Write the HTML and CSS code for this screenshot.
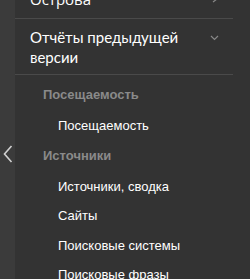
FILE: index.html
```html
<!DOCTYPE html>
<html lang="ru">
<head>
    <meta charset="UTF-8">
    <title>Меню</title>
    <link rel="stylesheet" href="styles.css">
</head>
<body>
    <div class="shell">
        <div class="back">
            <svg width="10" height="18" viewBox="0 0 10 18"><path d="M8.5 1 L1.5 9 L8.5 17" fill="none" stroke="#d0d0d0" stroke-width="1.6"/></svg>
        </div>
        <nav class="menu">
            <div class="item item-top">
                <span>Острова</span>
                <svg class="arrow" width="8" height="8" viewBox="0 0 8 8"><path d="M2 1 L6 4 L2 7" fill="none" stroke="#888" stroke-width="1.2"/></svg>
            </div>
            <div class="item item-open">
                <span>Отчёты предыдущей версии</span>
                <svg class="arrow down" width="9" height="6" viewBox="0 0 9 6"><path d="M1 1 L4.5 4.5 L8 1" fill="none" stroke="#888" stroke-width="1.2"/></svg>
            </div>
            <div class="group">
                <div class="group-title">Посещаемость</div>
                <a class="link" href="#">Посещаемость</a>
                <div class="group-title">Источники</div>
                <a class="link" href="#">Источники, сводка</a>
                <a class="link" href="#">Сайты</a>
                <a class="link" href="#">Поисковые системы</a>
                <a class="link" href="#">Поисковые фразы</a>
            </div>
        </nav>
    </div>
</body>
</html>
```
FILE: styles.css
```css
body {
    margin: 0;
    background-color: #333333;
    font-family: "Open Sans", "Liberation Sans", sans-serif;
    overflow: hidden;
}

.shell {
    display: flex;
    height: 279px;
}

.back {
    width: 15px;
    flex-shrink: 0;
    background-color: #3b3b3b;
    display: flex;
    align-items: center;
    justify-content: center;
    padding-top: 29px;
    box-sizing: border-box;
}

.menu {
    width: 218px;
    background-color: #333333;
}

.item {
    display: flex;
    justify-content: space-between;
    align-items: flex-start;
    padding: 0 14px 0 15px;
    color: #ffffff;
    font-size: 15px;
    line-height: 20px;
    border-bottom: 1px solid #4a4a4a;
}

.item-top {
    margin-top: -11px;
    height: 29px;
}

.item-top .arrow {
    margin-top: 6px;
}

.item-open {
    padding-top: 8px;
    padding-bottom: 7px;
    font-family: "Lato", "Open Sans", sans-serif;
}

.item-open span {
    width: 160px;
}

.arrow.down {
    margin-top: 8px;
}

.group {
    padding-top: 11px;
    font-family: "Liberation Sans", Arial, sans-serif;
    font-size: 13px;
}

.group-title {
    color: #8a8a8a;
    font-weight: bold;
    padding-left: 28px;
    height: 31px;
    line-height: 18px;
}

.link {
    display: block;
    color: #ffffff;
    text-decoration: none;
    padding-left: 43px;
    height: 29.5px;
    line-height: 18px;
}
```
